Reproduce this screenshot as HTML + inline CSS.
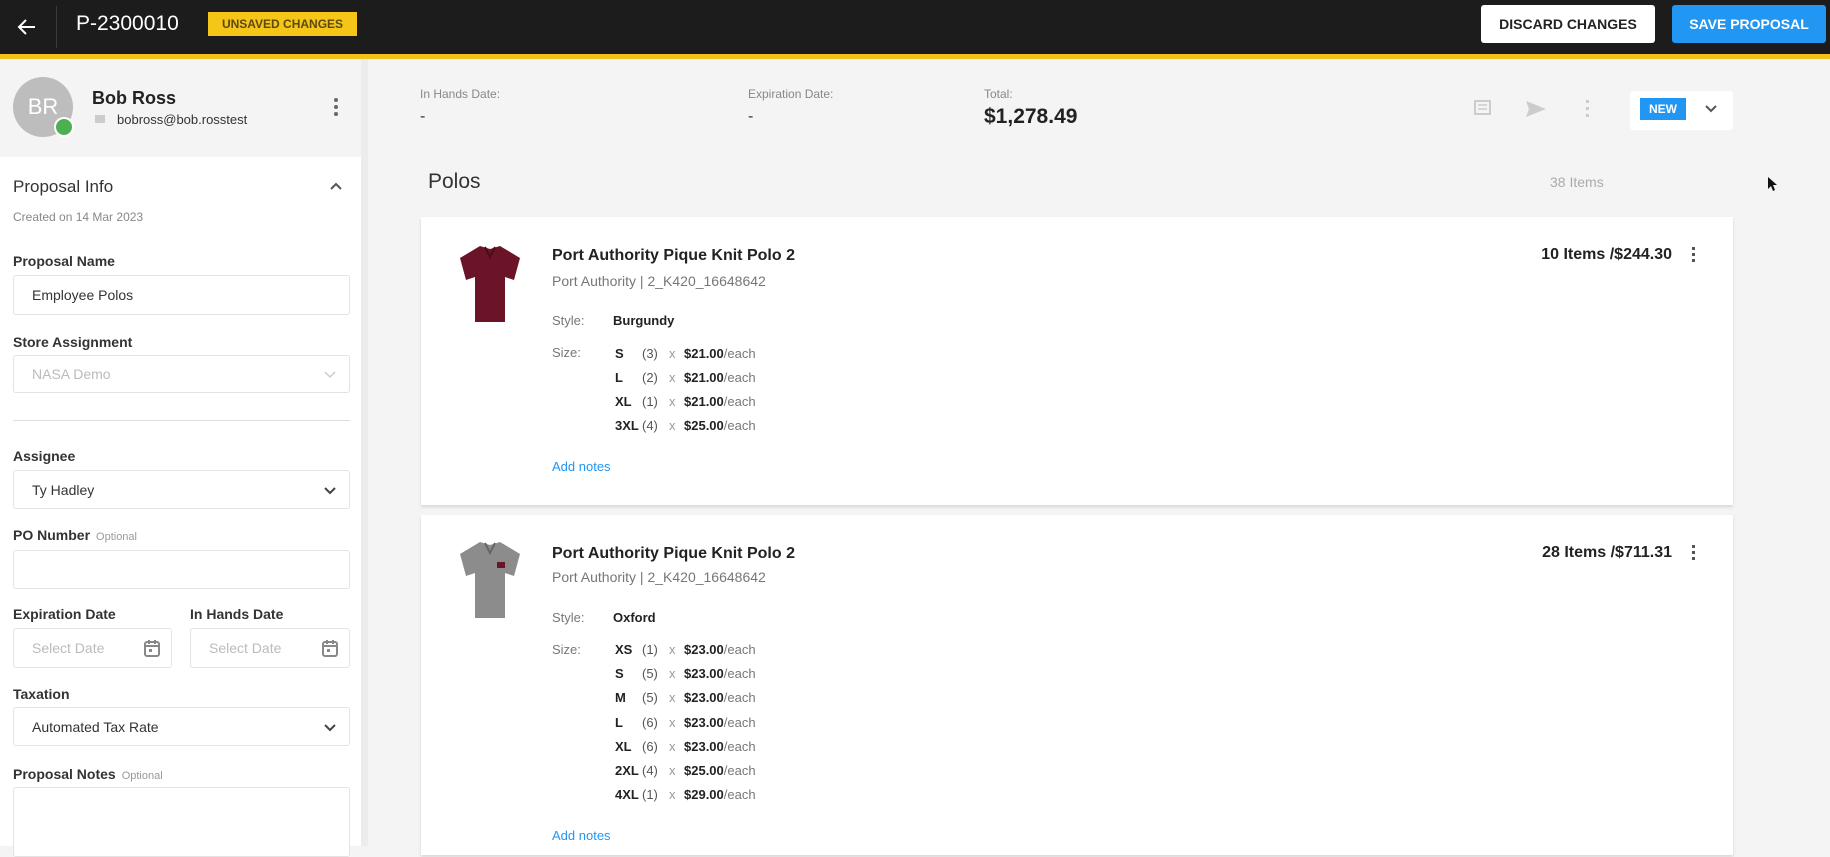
<!DOCTYPE html>
<html><head><style>
*{box-sizing:border-box;margin:0;padding:0}
body{width:1830px;height:846px;overflow:hidden;background:#f4f4f4;font-family:"Liberation Sans",Arial,sans-serif;color:#222;position:relative}
.a{position:absolute;white-space:nowrap}
.lbl{font-size:14px;font-weight:bold;color:#333;left:13px}
.opt{font-size:11px;font-weight:normal;color:#999;margin-left:6px}
.inp{position:absolute;background:#fff;border:1px solid #e3e3e3;border-radius:3px;font-size:14px;color:#333;padding-left:18px;display:flex;align-items:center}
.chev{position:absolute;right:12px;top:50%;margin-top:-6px}
.card{position:absolute;left:421px;width:1312px;background:#fff;box-shadow:0 2px 3px rgba(0,0,0,.12)}
.t{font-size:16px;font-weight:bold;color:#222}
.s{font-size:14px;color:#777}
.sm{font-size:13px;color:#777}
.b{font-size:13px;font-weight:bold;color:#222}
.blue{color:#2196f3;font-size:13px}
</style></head><body>
<div class="a" style="left:0;top:0;width:1830px;height:55px;background:#1c1c1c"></div>
<div class="a" style="left:0;top:54px;width:1830px;height:5px;background:#f2c11b"></div>
<svg class="a" style="left:15px;top:15px" width="24" height="24" viewBox="0 0 24 24"><path d="M20 12H5M11 5l-7 7 7 7" stroke="#fff" stroke-width="2" fill="none"/></svg>
<div class="a" style="left:56px;top:6px;width:1px;height:42px;background:#3a3a3a"></div>
<div class="a" style="left:76px;top:12px;font-size:21px;color:#fff">P-2300010</div>
<div class="a" style="left:208px;top:12px;width:149px;height:24px;background:#f5c518;color:#5a4a10;font-size:12px;font-weight:bold;display:flex;align-items:center;justify-content:center">UNSAVED CHANGES</div>
<div class="a" style="left:1481px;top:5px;width:174px;height:38px;background:#fff;border-radius:3px;font-size:14px;font-weight:bold;color:#222;display:flex;align-items:center;justify-content:center">DISCARD CHANGES</div>
<div class="a" style="left:1672px;top:5px;width:154px;height:38px;background:#2196f3;border-radius:3px;font-size:14px;font-weight:bold;color:#fff;display:flex;align-items:center;justify-content:center">SAVE PROPOSAL</div>

<div class="a" style="left:0;top:59px;width:361px;height:98px;background:#f4f4f4"></div>
<div class="a" style="left:0;top:157px;width:361px;height:689px;background:#fff"></div>
<div class="a" style="left:361px;top:59px;width:7px;height:787px;background:#ececec"></div>
<div class="a" style="left:13px;top:77px;width:60px;height:60px;border-radius:50%;background:#bdbdbd;color:#fff;font-size:22px;display:flex;align-items:center;justify-content:center">BR</div>
<div class="a" style="left:54px;top:117px;width:20px;height:20px;border-radius:50%;background:#fff;"></div>
<div class="a" style="left:56px;top:119px;width:16px;height:16px;border-radius:50%;background:#4caf50"></div>
<div class="a" style="left:92px;top:88px;font-size:18px;font-weight:bold;color:#222">Bob Ross</div>
<div class="a" style="left:95px;top:115px;width:10px;height:8px;background:#ccc"></div>
<div class="a" style="left:117px;top:112px;font-size:13px;color:#333">bobross@bob.rosstest</div>
<div class="a" style="left:334px;top:98px;width:4px;font-size:0"><div style="width:4px;height:4px;border-radius:2px;background:#666;margin-bottom:3px"></div><div style="width:4px;height:4px;border-radius:2px;background:#666;margin-bottom:3px"></div><div style="width:4px;height:4px;border-radius:2px;background:#666"></div></div>

<div class="a" style="left:13px;top:177px;font-size:17px;color:#333">Proposal Info</div>
<svg class="a" style="left:328px;top:180px" width="16" height="12" viewBox="0 0 16 12"><path d="M3 9l5-5 5 5" stroke="#555" stroke-width="2" fill="none"/></svg>
<div class="a" style="left:13px;top:210px;font-size:12px;color:#888">Created on 14 Mar 2023</div>

<div class="a lbl" style="top:253px">Proposal Name</div>
<div class="inp" style="left:13px;top:275px;width:337px;height:40px">Employee Polos</div>
<div class="a lbl" style="top:334px">Store Assignment</div>
<div class="inp" style="left:13px;top:355px;width:337px;height:38px;color:#bbb">NASA Demo<svg class="chev" width="14" height="12" viewBox="0 0 14 12"><path d="M2 4l5 5 5-5" stroke="#ccc" stroke-width="1.5" fill="none"/></svg></div>
<div class="a" style="left:13px;top:420px;width:337px;height:1px;background:#ddd"></div>
<div class="a lbl" style="top:448px">Assignee</div>
<div class="inp" style="left:13px;top:470px;width:337px;height:39px">Ty Hadley<svg class="chev" width="14" height="12" viewBox="0 0 14 12"><path d="M2 4l5 5 5-5" stroke="#444" stroke-width="2" fill="none"/></svg></div>
<div class="a lbl" style="top:527px">PO Number<span class="opt">Optional</span></div>
<div class="inp" style="left:13px;top:550px;width:337px;height:39px"></div>
<div class="a lbl" style="top:606px">Expiration Date</div>
<div class="a lbl" style="top:606px;left:190px">In Hands Date</div>
<div class="inp" style="left:13px;top:628px;width:159px;height:40px;color:#bbb">Select Date<svg class="chev" width="18" height="20" viewBox="0 0 18 20" style="margin-top:-10px;right:10px"><rect x="2" y="4" width="14" height="14" rx="2" stroke="#888" stroke-width="2" fill="none"/><path d="M2 8h14M6 2v4M12 2v4" stroke="#888" stroke-width="2"/><rect x="6" y="11" width="3" height="3" fill="#888"/></svg></div>
<div class="inp" style="left:190px;top:628px;width:160px;height:40px;color:#bbb">Select Date<svg class="chev" width="18" height="20" viewBox="0 0 18 20" style="margin-top:-10px;right:10px"><rect x="2" y="4" width="14" height="14" rx="2" stroke="#888" stroke-width="2" fill="none"/><path d="M2 8h14M6 2v4M12 2v4" stroke="#888" stroke-width="2"/><rect x="6" y="11" width="3" height="3" fill="#888"/></svg></div>
<div class="a lbl" style="top:686px">Taxation</div>
<div class="inp" style="left:13px;top:707px;width:337px;height:39px">Automated Tax Rate<svg class="chev" width="14" height="12" viewBox="0 0 14 12"><path d="M2 4l5 5 5-5" stroke="#444" stroke-width="2" fill="none"/></svg></div>
<div class="a lbl" style="top:766px">Proposal Notes<span class="opt">Optional</span></div>
<div class="inp" style="left:13px;top:787px;width:337px;height:70px"></div>

<div class="a" style="left:420px;top:87px;font-size:12px;color:#888">In Hands Date:</div>
<div class="a" style="left:420px;top:108px;font-size:16px;color:#333">-</div>
<div class="a" style="left:748px;top:87px;font-size:12px;color:#888">Expiration Date:</div>
<div class="a" style="left:748px;top:108px;font-size:16px;color:#333">-</div>
<div class="a" style="left:984px;top:87px;font-size:12px;color:#888">Total:</div>
<div class="a" style="left:984px;top:105px;font-size:21px;font-weight:bold;color:#222">$1,278.49</div>
<svg class="a" style="left:1472px;top:98px" width="22" height="22" viewBox="0 0 22 22"><rect x="3" y="3" width="15" height="13" stroke="#ccc" stroke-width="2" fill="none"/><path d="M6 7h9M6 11h9" stroke="#ccc" stroke-width="1.5"/></svg>
<svg class="a" style="left:1524px;top:98px" width="24" height="22" viewBox="0 0 24 22"><path d="M2 3l20 8-20 8 3-8z" fill="#ccc"/></svg>
<div class="a" style="left:1586px;top:100px;font-size:0"><div style="width:3px;height:3px;background:#ccc;margin-bottom:4px"></div><div style="width:3px;height:3px;background:#ccc;margin-bottom:4px"></div><div style="width:3px;height:3px;background:#ccc"></div></div>
<div class="a" style="left:1630px;top:91px;width:103px;height:39px;background:#fff;border-radius:3px"></div>
<div class="a" style="left:1640px;top:98px;width:46px;height:22px;background:#2196f3;color:#fff;font-size:12px;font-weight:bold;display:flex;align-items:center;justify-content:center">NEW</div>
<svg class="a" style="left:1703px;top:103px" width="16" height="12" viewBox="0 0 16 12"><path d="M3 3l5 5 5-5" stroke="#555" stroke-width="2" fill="none"/></svg>
<div class="a" style="left:428px;top:170px;font-size:21px;color:#333">Polos</div>
<div class="a" style="left:1550px;top:174px;font-size:14px;color:#aaa">38 Items</div>
<svg class="a" style="left:1767px;top:176px" width="10" height="16" viewBox="0 0 10 16"><path d="M1 1v12l3-3 2 5 2-1-2-5h4z" fill="#111"/></svg>

<div class="card" style="top:217px;height:288px"></div>
<svg class="a" style="left:455px;top:244px" width="70" height="80" viewBox="0 0 70 80"><path d="M25 2l10 3 10-3 20 12-6 22-9-3v45H20V33l-9 3L5 14z" fill="#6b1428"/><path d="M30 3l5 10 5-10" stroke="#4a0d1b" stroke-width="2" fill="none"/></svg>
<div class="a t" style="left:552px;top:247px">Port Authority Pique Knit Polo 2</div>
<div class="a s" style="left:552px;top:273px">Port Authority | 2_K420_16648642</div>
<div class="a sm" style="left:552px;top:313px">Style:</div>
<div class="a b" style="left:613px;top:313px">Burgundy</div>
<div class="a sm" style="left:552px;top:345px">Size:</div>
<div class="a" style="left:615px;top:342px;font-size:13px;line-height:24px">
<div><b style="display:inline-block;width:27px">S</b><span style="display:inline-block;width:27px;color:#555">(3)</span><span style="display:inline-block;width:15px;color:#999">x</span><b>$21.00</b><span style="color:#777">/each</span></div>
<div><b style="display:inline-block;width:27px">L</b><span style="display:inline-block;width:27px;color:#555">(2)</span><span style="display:inline-block;width:15px;color:#999">x</span><b>$21.00</b><span style="color:#777">/each</span></div>
<div><b style="display:inline-block;width:27px">XL</b><span style="display:inline-block;width:27px;color:#555">(1)</span><span style="display:inline-block;width:15px;color:#999">x</span><b>$21.00</b><span style="color:#777">/each</span></div>
<div><b style="display:inline-block;width:27px">3XL</b><span style="display:inline-block;width:27px;color:#555">(4)</span><span style="display:inline-block;width:15px;color:#999">x</span><b>$25.00</b><span style="color:#777">/each</span></div>
</div>
<div class="a blue" style="left:552px;top:459px">Add notes</div>
<div class="a" style="right:158px;top:246px;font-size:16px;font-weight:bold;color:#222">10 Items /$244.30</div>
<div class="a" style="left:1692px;top:247px;font-size:0"><div style="width:3px;height:3px;background:#555;margin-bottom:3px"></div><div style="width:3px;height:3px;background:#555;margin-bottom:3px"></div><div style="width:3px;height:3px;background:#555"></div></div>

<div class="card" style="top:515px;height:340px"></div>
<svg class="a" style="left:455px;top:540px" width="70" height="80" viewBox="0 0 70 80"><path d="M25 2l10 3 10-3 20 12-6 22-9-3v45H20V33l-9 3L5 14z" fill="#8c8c8c"/><path d="M30 3l5 10 5-10" stroke="#666" stroke-width="2" fill="none"/><rect x="42" y="22" width="8" height="6" fill="#6b1428"/></svg>
<div class="a t" style="left:552px;top:545px">Port Authority Pique Knit Polo 2</div>
<div class="a s" style="left:552px;top:569px">Port Authority | 2_K420_16648642</div>
<div class="a sm" style="left:552px;top:610px">Style:</div>
<div class="a b" style="left:613px;top:610px">Oxford</div>
<div class="a sm" style="left:552px;top:642px">Size:</div>
<div class="a" style="left:615px;top:638px;font-size:13px;line-height:24.2px">
<div><b style="display:inline-block;width:27px">XS</b><span style="display:inline-block;width:27px;color:#555">(1)</span><span style="display:inline-block;width:15px;color:#999">x</span><b>$23.00</b><span style="color:#777">/each</span></div>
<div><b style="display:inline-block;width:27px">S</b><span style="display:inline-block;width:27px;color:#555">(5)</span><span style="display:inline-block;width:15px;color:#999">x</span><b>$23.00</b><span style="color:#777">/each</span></div>
<div><b style="display:inline-block;width:27px">M</b><span style="display:inline-block;width:27px;color:#555">(5)</span><span style="display:inline-block;width:15px;color:#999">x</span><b>$23.00</b><span style="color:#777">/each</span></div>
<div><b style="display:inline-block;width:27px">L</b><span style="display:inline-block;width:27px;color:#555">(6)</span><span style="display:inline-block;width:15px;color:#999">x</span><b>$23.00</b><span style="color:#777">/each</span></div>
<div><b style="display:inline-block;width:27px">XL</b><span style="display:inline-block;width:27px;color:#555">(6)</span><span style="display:inline-block;width:15px;color:#999">x</span><b>$23.00</b><span style="color:#777">/each</span></div>
<div><b style="display:inline-block;width:27px">2XL</b><span style="display:inline-block;width:27px;color:#555">(4)</span><span style="display:inline-block;width:15px;color:#999">x</span><b>$25.00</b><span style="color:#777">/each</span></div>
<div><b style="display:inline-block;width:27px">4XL</b><span style="display:inline-block;width:27px;color:#555">(1)</span><span style="display:inline-block;width:15px;color:#999">x</span><b>$29.00</b><span style="color:#777">/each</span></div>
</div>
<div class="a blue" style="left:552px;top:828px">Add notes</div>
<div class="a" style="right:158px;top:544px;font-size:16px;font-weight:bold;color:#222">28 Items /$711.31</div>
<div class="a" style="left:1692px;top:545px;font-size:0"><div style="width:3px;height:3px;background:#555;margin-bottom:3px"></div><div style="width:3px;height:3px;background:#555;margin-bottom:3px"></div><div style="width:3px;height:3px;background:#555"></div></div>
</body></html>
